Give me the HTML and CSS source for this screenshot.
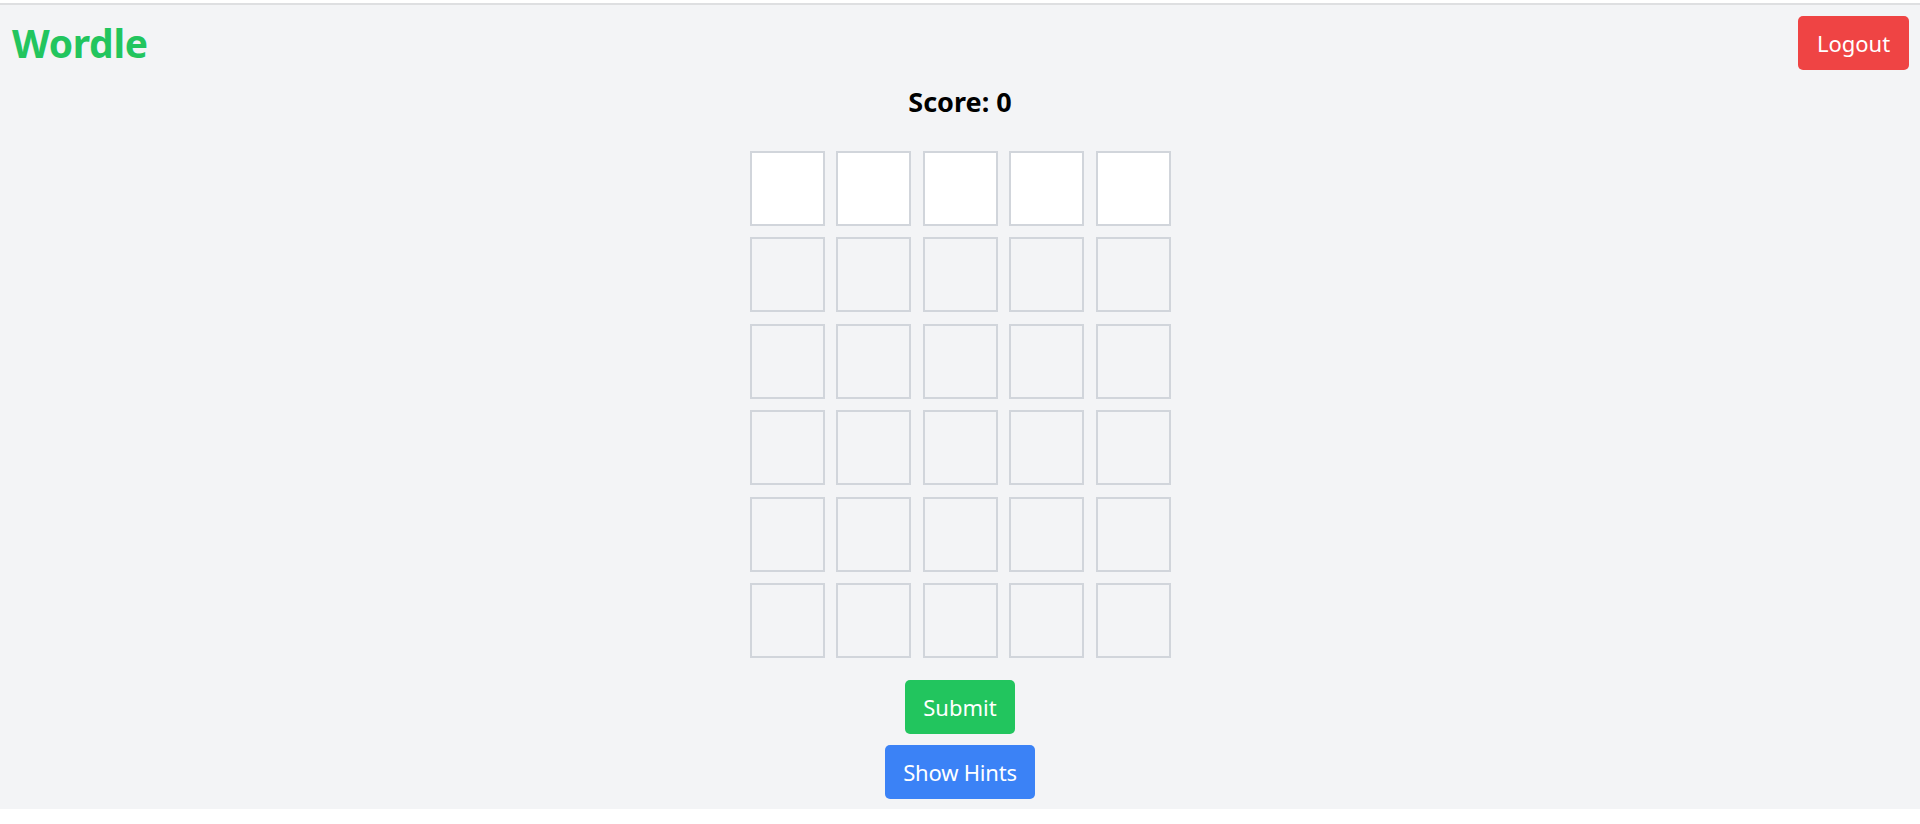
FILE: index.html
```html
<!DOCTYPE html>
<html lang="en">
<head>
<meta charset="utf-8">
<title>Wordle</title>
<link rel="stylesheet" href="styles.css">
</head>
<body>
<div class="app">
  <header class="header">
    <h1 class="logo">Wordle</h1>
    <button class="btn btn-red">Logout</button>
  </header>
  <h2 class="score">Score: 0</h2>
  <div class="board">
    <div class="row">
      <div class="cell active"></div><div class="cell active"></div><div class="cell active"></div><div class="cell active"></div><div class="cell active"></div>
    </div>
    <div class="row">
      <div class="cell"></div><div class="cell"></div><div class="cell"></div><div class="cell"></div><div class="cell"></div>
    </div>
    <div class="row">
      <div class="cell"></div><div class="cell"></div><div class="cell"></div><div class="cell"></div><div class="cell"></div>
    </div>
    <div class="row">
      <div class="cell"></div><div class="cell"></div><div class="cell"></div><div class="cell"></div><div class="cell"></div>
    </div>
    <div class="row">
      <div class="cell"></div><div class="cell"></div><div class="cell"></div><div class="cell"></div><div class="cell"></div>
    </div>
    <div class="row">
      <div class="cell"></div><div class="cell"></div><div class="cell"></div><div class="cell"></div><div class="cell"></div>
    </div>
  </div>
  <div class="actions">
    <button class="btn btn-green">Submit</button>
    <button class="btn btn-blue">Show Hints</button>
  </div>
</div>
</body>
</html>
```

FILE: styles.css
```css
* { box-sizing: border-box; }
html, body {
  margin: 0;
  padding: 0;
  background: #ffffff;
}
body {
  padding-top: 3px;
  font-family: "Noto Sans", "Open Sans", "Liberation Sans", sans-serif;
}
.app {
  border-top: 2px solid #dedfe1;
  background: #f3f4f6;
  height: 806px;
  padding: 11px 11px 0 11px;
  display: flex;
  flex-direction: column;
  align-items: center;
}
.header {
  width: 100%;
  display: flex;
  justify-content: space-between;
  align-items: center;
  height: 54px;
}
.logo {
  margin: 0 0 0 1px;
  font-size: 39px;
  font-weight: 700;
  color: #22c55e;
  line-height: 54px;
  letter-spacing: -0.3px;
}
.btn {
  border: none;
  border-radius: 5px;
  height: 54px;
  padding: 0;
  text-align: center;
  white-space: nowrap;
  font-family: inherit;
  font-size: 22px;
  color: #ffffff;
  line-height: 54px;
}
.btn-red { background: #ef4444; width: 111px; }
.btn-green { background: #22c55e; width: 110px; }
.btn-blue { background: #3b82f6; width: 150px; letter-spacing: -0.2px; }
.score {
  margin: 14px 0 0;
  font-size: 27px;
  font-weight: 700;
  line-height: 36px;
  color: #000000;
}
.board {
  margin-top: 31px;
  display: flex;
  flex-direction: column;
  gap: 11.4px;
}
.row {
  display: flex;
  gap: 11.5px;
}
.cell {
  width: 75px;
  height: 75px;
  border: 2px solid #d1d5db;
  background: #f3f4f6;
}
.cell.active { background: #ffffff; }
.actions {
  margin-top: 22px;
  display: flex;
  flex-direction: column;
  align-items: center;
  gap: 11px;
}
```
